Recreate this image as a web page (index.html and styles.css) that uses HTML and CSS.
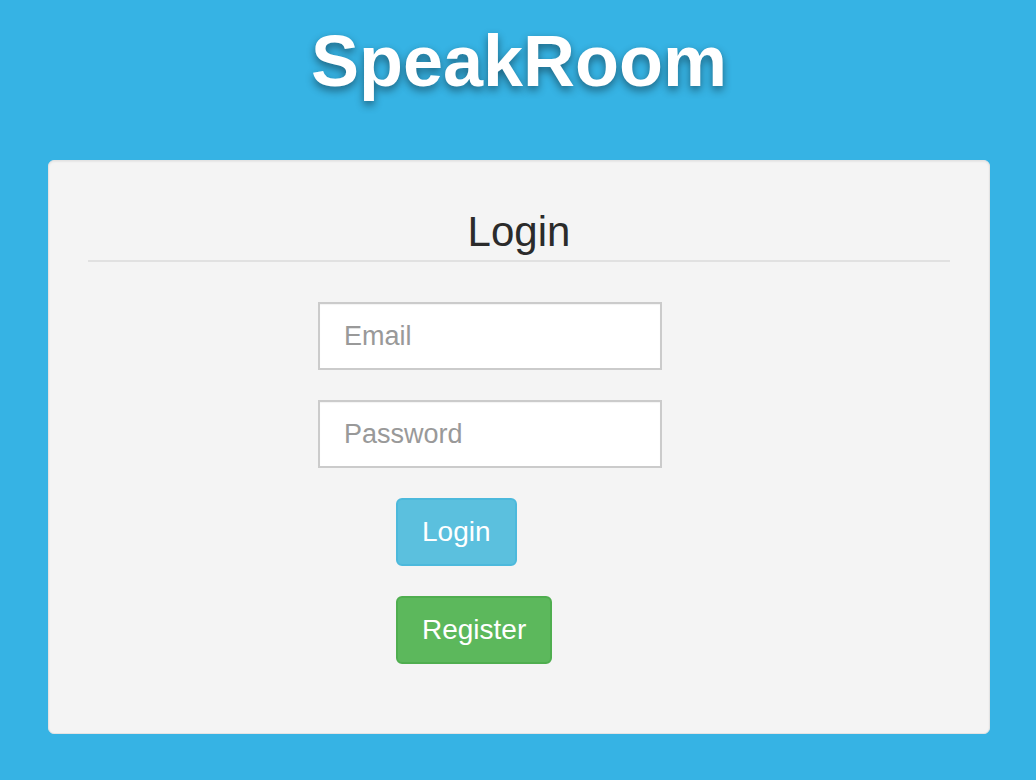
FILE: index.html
```html
<!DOCTYPE html>
<html lang="en">
<head>
<meta charset="utf-8">
<title>SpeakRoom</title>
<link rel="stylesheet" href="styles.css">
</head>
<body>
<header class="site-header">
  <h1 class="brand">SpeakRoom</h1>
</header>
<main class="card">
  <h2 class="card-title">Login</h2>
  <hr class="divider">
  <form class="login-form" onsubmit="return false;">
    <input class="field" type="email" placeholder="Email">
    <input class="field" type="password" placeholder="Password">
    <div class="actions">
      <button class="btn btn-info" type="submit">Login</button>
      <button class="btn btn-success" type="button">Register</button>
    </div>
  </form>
</main>
</body>
</html>
```

FILE: styles.css
```css
* { box-sizing: border-box; }

html, body {
  margin: 0;
  padding: 0;
}

body {
  background: #36b3e4;
  font-family: "Liberation Sans", Arial, sans-serif;
  height: 780px;
  overflow: hidden;
}

.site-header {
  padding-top: 25px;
  height: 160px;
}

.brand {
  margin: 0;
  text-align: center;
  font-size: 72px;
  line-height: 72px;
  font-weight: bold;
  color: #ffffff;
  text-shadow: 0 4px 8px rgba(0, 0, 0, 0.45);
  padding-left: 2px;
}

.card {
  margin: 0 46px 0 48px;
  width: 942px;
  height: 574px;
  background: #f4f4f4;
  border: 1px solid #e3e3e3;
  border-radius: 6px;
  box-shadow: inset 0 1px 2px rgba(0, 0, 0, 0.06);
  padding: 48px 39px 0;
}

.card-title {
  margin: 0;
  text-align: center;
  font-weight: normal;
  font-size: 42px;
  line-height: 46px;
  color: #2b2b2b;
}

.divider {
  margin: 5px 0 0;
  border: 0;
  border-top: 2px solid #e1e1e1;
  height: 0;
}

.login-form {
  margin: 40px 0 0 230px;
  display: flex;
  flex-direction: column;
  gap: 30px;
  align-items: flex-start;
}

.field {
  width: 344px;
  height: 68px;
  border: 2px solid #cbcbcb;
  background: #ffffff;
  padding: 0 24px;
  font-family: "Liberation Sans", Arial, sans-serif;
  font-size: 27px;
  color: #555;
  outline: none;
  border-radius: 0;
  box-shadow: inset 0 1px 1px rgba(0, 0, 0, 0.05);
}

.field::placeholder {
  color: #999999;
}

.actions {
  margin-left: 78px;
  display: flex;
  flex-direction: column;
  align-items: flex-start;
  gap: 30px;
}

.btn {
  height: 68px;
  padding: 0 24px;
  border-radius: 6px;
  border: 2px solid transparent;
  font-family: "Liberation Sans", Arial, sans-serif;
  font-size: 28px;
  color: #ffffff;
  cursor: pointer;
}

.btn-info {
  background: #5bc0de;
  border-color: #4cb9dc;
}

.btn-success {
  background: #5cb85c;
  border-color: #4fae4f;
}
```
